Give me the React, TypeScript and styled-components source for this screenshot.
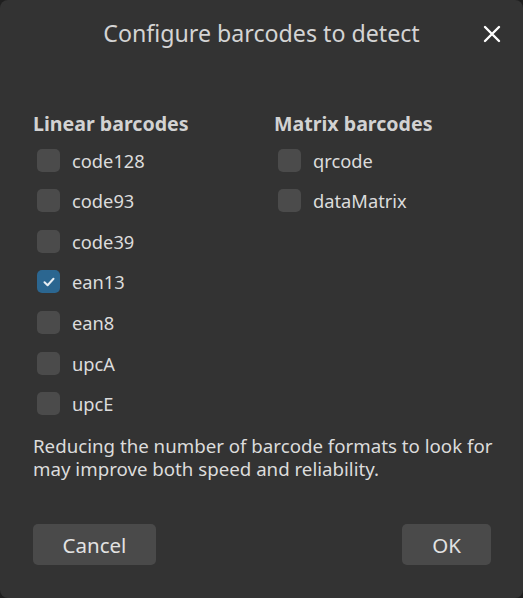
import React, { useState } from "react";
import styled, { createGlobalStyle } from "styled-components";

const Global = createGlobalStyle`
  html, body { margin: 0; padding: 0; background: #1f1f1f; }
  body { font-family: "Noto Sans", "Open Sans", sans-serif; }
  * { box-sizing: border-box; }
`;

const Dialog = styled.div`
  width: 523px;
  height: 598px;
  background: #333333;
  border-radius: 8px;
  display: flex;
  flex-direction: column;
  color: #dcdcdc;
  overflow: hidden;
`;

const Header = styled.div`
  height: 68px;
  display: grid;
  grid-template-columns: 1fr auto 1fr;
  align-items: center;
  padding: 0 19px;
`;

const Title = styled.h1`
  grid-column: 2;
  margin: 0 0 2px 0;
  font-size: 23.2px;
  line-height: 30px;
  font-weight: 400;
  color: #d4d4d4;
`;

const CloseButton = styled.button`
  grid-column: 3;
  justify-self: end;
  width: 24px;
  height: 24px;
  padding: 0;
  border: none;
  background: transparent;
  display: flex;
  align-items: center;
  justify-content: center;
  cursor: pointer;
`;

const Body = styled.div`
  flex: 1;
  display: flex;
  flex-direction: column;
  padding: 43px 12px 33px 33px;
`;

const Columns = styled.div`
  display: grid;
  grid-template-columns: 241px 1fr;
`;

const Column = styled.div`
  display: flex;
  flex-direction: column;
`;

const Heading = styled.h2`
  margin: 0 0 2.7px 0;
  font-size: 19.6px;
  line-height: 26px;
  font-weight: 700;
  color: #d2d2d2;
`;

const Row = styled.label`
  height: 40.67px;
  display: flex;
  align-items: center;
  gap: 12px;
  padding-left: 4px;
  cursor: pointer;
  font-size: 18.3px;
  color: #dcdcdc;
`;

const Box = styled.span<{ $checked: boolean }>`
  width: 23px;
  height: 23px;
  border-radius: 5px;
  background: ${(p) => (p.$checked ? "#2b6690" : "#4b4b4b")};
  display: flex;
  align-items: center;
  justify-content: center;
  flex-shrink: 0;
`;

const Note = styled.p`
  margin: 10px 0 0 0;
  font-size: 18.7px;
  line-height: 23px;
  color: #dcdcdc;
  white-space: nowrap;
`;

const Footer = styled.div`
  margin-top: auto;
  display: flex;
  justify-content: space-between;
  padding-right: 20px;
`;

const Button = styled.button<{ $width: number }>`
  width: ${(p) => p.$width}px;
  height: 41px;
  border: none;
  border-radius: 5px;
  background: #4a4a4a;
  color: #e2e2e2;
  font-family: "Noto Sans", "Open Sans", sans-serif;
  font-size: 20.5px;
  cursor: pointer;
`;

const linear = ["code128", "code93", "code39", "ean13", "ean8", "upcA", "upcE"];
const matrix = ["qrcode", "dataMatrix"];

function Check({ name, checked, onToggle }: { name: string; checked: boolean; onToggle: () => void }) {
  return (
    <Row onClick={onToggle}>
      <Box $checked={checked}>
        {checked && (
          <svg width="14" height="14" viewBox="0 0 14 14">
            <path d="M2.5 7.3 L5.6 10.2 L11.5 3.8" fill="none" stroke="#e8eef3" strokeWidth="2" strokeLinecap="round" strokeLinejoin="round" />
          </svg>
        )}
      </Box>
      {name}
    </Row>
  );
}

export default function App() {
  const [sel, setSel] = useState<Record<string, boolean>>({ ean13: true });
  const toggle = (n: string) => setSel((s) => ({ ...s, [n]: !s[n] }));
  return (
    <>
      <Global />
      <Dialog>
        <Header>
          <Title>Configure barcodes to detect</Title>
          <CloseButton aria-label="Close">
            <svg width="18" height="18" viewBox="0 0 18 18">
              <path d="M2 2 L16 16 M16 2 L2 16" stroke="#ffffff" strokeWidth="2.4" strokeLinecap="round" />
            </svg>
          </CloseButton>
        </Header>
        <Body>
          <Columns>
            <Column>
              <Heading>Linear barcodes</Heading>
              {linear.map((n) => (
                <Check key={n} name={n} checked={!!sel[n]} onToggle={() => toggle(n)} />
              ))}
            </Column>
            <Column>
              <Heading>Matrix barcodes</Heading>
              {matrix.map((n) => (
                <Check key={n} name={n} checked={!!sel[n]} onToggle={() => toggle(n)} />
              ))}
            </Column>
          </Columns>
          <Note>
            Reducing the number of barcode formats to look for
            <br />
            may improve both speed and reliability.
          </Note>
          <Footer>
            <Button $width={123}>Cancel</Button>
            <Button $width={89}>OK</Button>
          </Footer>
        </Body>
      </Dialog>
    </>
  );
}
